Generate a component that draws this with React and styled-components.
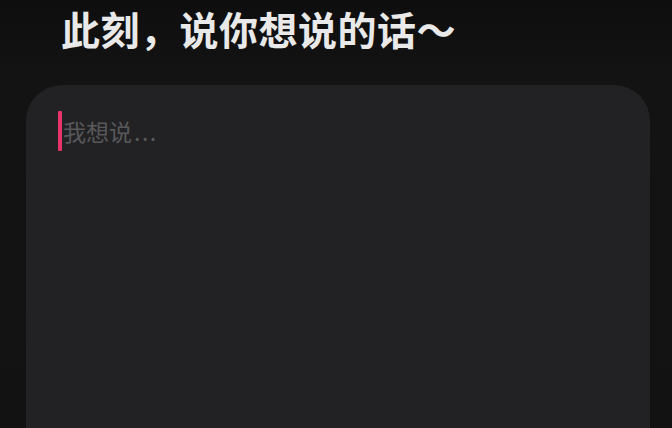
import React from "react";
import styled, { createGlobalStyle } from "styled-components";

const GlobalStyle = createGlobalStyle`
  html, body {
    margin: 0;
    padding: 0;
    background: #121212;
  }
  body {
    font-family: "Noto Sans CJK SC", "Noto Sans", sans-serif;
    overflow: hidden;
  }
`;

const Page = styled.div`
  width: 672px;
  height: 428px;
  background: linear-gradient(#0e0e0e, #131313 80px, #121212);
  overflow: hidden;
`;

const Title = styled.h1`
  margin: 0;
  padding: 0 0 0 61px;
  height: 56px;
  line-height: 56px;
  font-size: 39px;
  font-weight: 700;
  color: #e9e9e9;
  letter-spacing: 0.5px;
`;

const Card = styled.div`
  margin: 29px 22px 0 26px;
  height: 400px;
  background: #222224;
  border-radius: 36px;
  padding: 26px 32px;
  box-sizing: border-box;
`;

const InputRow = styled.div`
  display: flex;
  align-items: center;
  height: 40px;
`;

const Caret = styled.span`
  flex: none;
  width: 4px;
  height: 40px;
  border-radius: 1px;
  background: #e8326a;
`;

const Placeholder = styled.span`
  font-size: 23px;
  color: #58585b;
  line-height: 40px;
  margin-left: 1px;
`;

const Dots = styled.span`
  letter-spacing: 1.5px;
  margin-left: 2px;
`;

export default function App() {
  return (
    <>
      <GlobalStyle />
      <Page>
        <Title>此刻，说你想说的话～</Title>
        <Card>
          <InputRow>
            <Caret />
            <Placeholder>
              我想说<Dots>...</Dots>
            </Placeholder>
          </InputRow>
        </Card>
      </Page>
    </>
  );
}
